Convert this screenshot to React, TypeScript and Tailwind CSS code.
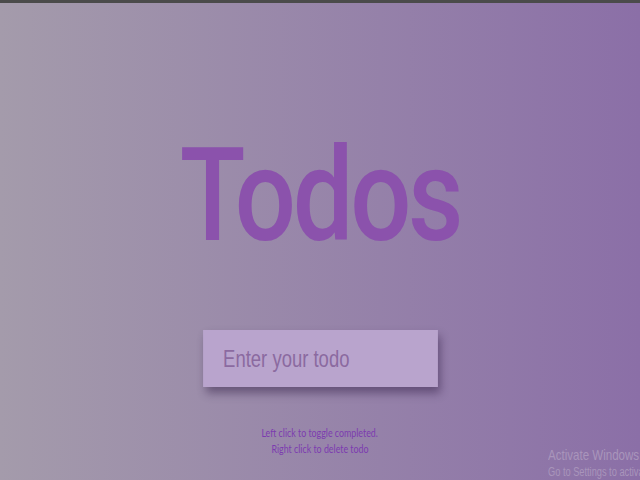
import React from "react";

const squeeze = "inline-block origin-center scale-x-[0.77]";

export default function App() {
  return (
    <div className="relative h-[480px] w-[640px] overflow-hidden border-t-[3px] border-[#4b4b4b] bg-gradient-to-r from-[#a49bab] to-[#8b6fa7] font-['Liberation_Sans',Arial,sans-serif]">
      <div className="flex flex-col items-center">
        <h1 className="mt-[128px] font-['Roboto',sans-serif] text-[130px] font-medium leading-none tracking-[-4px] text-[#8b52ac]">
          <span className="inline-block origin-center scale-x-[0.83]">Todos</span>
        </h1>
        <input
          type="text"
          placeholder="Enter your todo"
          className="mt-[69px] h-[57px] w-[305px] origin-center scale-x-[0.77] bg-[#b9a4cd] pl-[26px] text-[24px] text-[#5f3f78] shadow-[4px_6px_10px_rgba(40,20,60,0.45)] outline-none placeholder:text-[#8b6aa0]"
        />
        <div className="mt-[38px] text-center font-['Lato',sans-serif] text-[11.5px] leading-[16px] text-[#7c3bb0]">
          <p>
            <span className={squeeze}>Left click to toggle completed.</span>
          </p>
          <p>
            <span className={squeeze}>Right click to delete todo</span>
          </p>
        </div>
      </div>
      <div className="absolute left-[548px] top-[443px] origin-left scale-x-[0.77] whitespace-nowrap font-['Liberation_Sans',sans-serif] text-[#a995bb]">
        <p className="text-[15px] leading-[18px]">Activate Windows</p>
        <p className="text-[12px] leading-[16px]">Go to Settings to activate Windows.</p>
      </div>
    </div>
  );
}
